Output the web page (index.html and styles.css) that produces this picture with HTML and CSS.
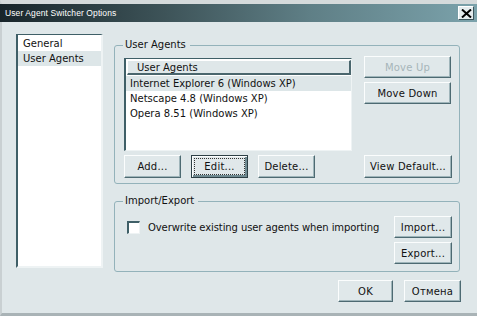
FILE: index.html
```html
<!DOCTYPE html>
<html lang="en">
<head>
    <meta charset="UTF-8">
    <title>User Agent Switcher Options</title>
    <link rel="stylesheet" href="styles.css">
</head>
<body>
    <div class="window">
        <div class="titlebar">
            <span class="title">User Agent Switcher Options</span>
            <span class="close">
                <svg width="11" height="9" viewBox="0 0 11 9">
                    <path d="M1 0.5 L10 8.5 M10 0.5 L1 8.5" stroke="#000" stroke-width="2" fill="none"/>
                </svg>
            </span>
        </div>
        <div class="content">
            <ul class="nav">
                <li>General</li>
                <li class="selected">User Agents</li>
            </ul>
            <div class="main">
                <fieldset class="group agents">
                    <legend>User Agents</legend>
                    <div class="agents-grid">
                        <div class="list">
                            <div class="list-header">User Agents</div>
                            <div class="list-row selected">Internet Explorer 6 (Windows XP)</div>
                            <div class="list-row">Netscape 4.8 (Windows XP)</div>
                            <div class="list-row">Opera 8.51 (Windows XP)</div>
                        </div>
                        <div class="side-buttons">
                            <button class="btn" disabled>Move Up</button>
                            <button class="btn">Move Down</button>
                        </div>
                        <div class="row-buttons">
                            <button class="btn small">Add...</button>
                            <button class="btn small default"><span>Edit...</span></button>
                            <button class="btn small">Delete...</button>
                        </div>
                        <button class="btn">View Default...</button>
                    </div>
                </fieldset>
                <fieldset class="group import">
                    <legend>Import/Export</legend>
                    <div class="import-grid">
                        <label class="check"><span class="box"></span>Overwrite existing user agents when importing</label>
                        <div class="import-buttons">
                            <button class="btn narrow">Import...</button>
                            <button class="btn narrow">Export...</button>
                        </div>
                    </div>
                </fieldset>
                <div class="dialog-buttons">
                    <button class="btn ok">OK</button>
                    <button class="btn cancel">Отмена</button>
                </div>
            </div>
        </div>
    </div>
</body>
</html>
```

FILE: styles.css
```css
body {
    margin: 0;
    font-family: "DejaVu Sans", Verdana, sans-serif;
    font-size: 10px;
    color: #111;
    background-color: #dfe7e9;
}
.window {
    width: 477px;
    height: 316px;
    box-sizing: border-box;
    border-top: 4px solid #d5dadb;
    border-left: 2px solid #c9d0d2;
    border-bottom: 3px solid #a9b3b6;
    background-color: #dfe7e9;
    display: flex;
    flex-direction: column;
}
.titlebar {
    height: 18px;
    display: flex;
    align-items: center;
    justify-content: space-between;
    padding: 0 3px 0 3px;
    margin-left: -2px;
    background: linear-gradient(to right, #18252a 0%, #3e5459 35%, #5f7f86 65%, #7ba2ab 100%);
}
.title {
    color: #fff;
    font-family: "Liberation Sans", Arial, sans-serif;
    font-size: 8.5px;
    letter-spacing: 0.1px;
    padding-left: 2px;
}
.close {
    width: 14px;
    height: 12px;
    background-color: #e4ecee;
    border: 1px solid;
    border-color: #fff #3c555b #3c555b #fff;
    display: flex;
    align-items: center;
    justify-content: center;
}
.content {
    flex: 1;
    display: flex;
    padding: 12px 0 0 14px;
}
.nav {
    list-style: none;
    margin: 0;
    padding: 1px 0 0 0;
    width: 87px;
    height: 234px;
    box-sizing: border-box;
    background-color: #fff;
    border: 2px solid;
    border-color: #3f5f67 #eef3f4 #eef3f4 #3f5f67;
    border-width: 1px 2px 2px 2px;
}
.nav li {
    height: 15px;
    line-height: 15px;
    padding-left: 5px;
}
.nav li.selected {
    background-color: #dde6e8;
}
.main {
    width: 346px;
    margin-left: 11px;
    margin-top: 4px;
}
.group {
    margin: 0;
    padding: 0 7px 0 9px;
    border: 1px solid #93b2ba;
    border-radius: 3px;
}
.group legend {
    padding: 0 4px 0 2px;
    margin-left: -1px;
    line-height: 14px;
}
.agents {
    height: 146px;
    box-sizing: border-box;
}
.agents-grid {
    display: grid;
    grid-template-columns: 228px 87px;
    column-gap: 12px;
    row-gap: 4px;
    padding-top: 4px;
}
.list {
    height: 93px;
    box-sizing: border-box;
    margin-top: 2px;
    background-color: #fff;
    border: 2px solid;
    border-color: #3f5f67 #eef3f4 #eef3f4 #3f5f67;
    border-width: 1px 1px 1px 2px;
}
.list-header {
    height: 15px;
    line-height: 14px;
    margin: 1px 0 1px 1px;
    padding-left: 9px;
    box-sizing: border-box;
    background-color: #dfe7e9;
    border: 1px solid;
    border-color: #fff #4a666d #4a666d #fff;
    border-width: 1px 2px 2px 1px;
}
.list-row {
    height: 15px;
    line-height: 15px;
    padding-left: 4px;
}
.list-row.selected {
    background-color: #dde6e8;
}
.side-buttons {
    display: flex;
    flex-direction: column;
    gap: 4px;
}
.btn {
    font-family: "DejaVu Sans", Verdana, sans-serif;
    font-size: 10px;
    color: #111;
    height: 22px;
    width: 87px;
    padding: 0;
    background-color: #e0e8ea;
    border: 1px solid;
    border-color: #fbfdfd #4d6a72 #4d6a72 #fbfdfd;
    box-shadow: inset -1px -1px 0 #9fb5ba;
    letter-spacing: 0.2px;
}
.btn:disabled {
    color: #a6b5b9;
}
.row-buttons {
    display: flex;
    gap: 10px;
}
.btn.small {
    width: 57px;
    height: 23px;
}
.agents-grid > .btn {
    height: 23px;
    width: 88px;
}
.btn.default {
    border-color: #2d4046;
    box-shadow: inset 1px 1px 0 #fbfdfd, inset -2px -2px 0 #6f8a91;
    padding: 2px;
}
.btn.default span {
    display: block;
    height: 100%;
    line-height: 15px;
    border: 1px dotted #333;
    box-sizing: border-box;
}
.import {
    height: 78px;
    box-sizing: border-box;
    margin-top: 10px;
}
.import-grid {
    display: flex;
    justify-content: space-between;
    padding-top: 8px;
}
.check {
    display: flex;
    align-items: center;
    gap: 8px;
    height: 22px;
    padding-left: 3px;
    letter-spacing: -0.1px;
}
.box {
    width: 10px;
    height: 10px;
    background-color: #fff;
    border: 1px solid;
    border-color: #3f5f67 #eef3f4 #eef3f4 #3f5f67;
    border-width: 2px 1px 1px 2px;
}
.import-buttons {
    display: flex;
    flex-direction: column;
    gap: 4px;
}
.btn.narrow {
    width: 58px;
}
.dialog-buttons {
    display: flex;
    justify-content: flex-end;
    gap: 11px;
    margin-top: 8px;
    margin-right: -1px;
}
.btn.ok {
    width: 55px;
}
.btn.cancel {
    width: 57px;
}
```
